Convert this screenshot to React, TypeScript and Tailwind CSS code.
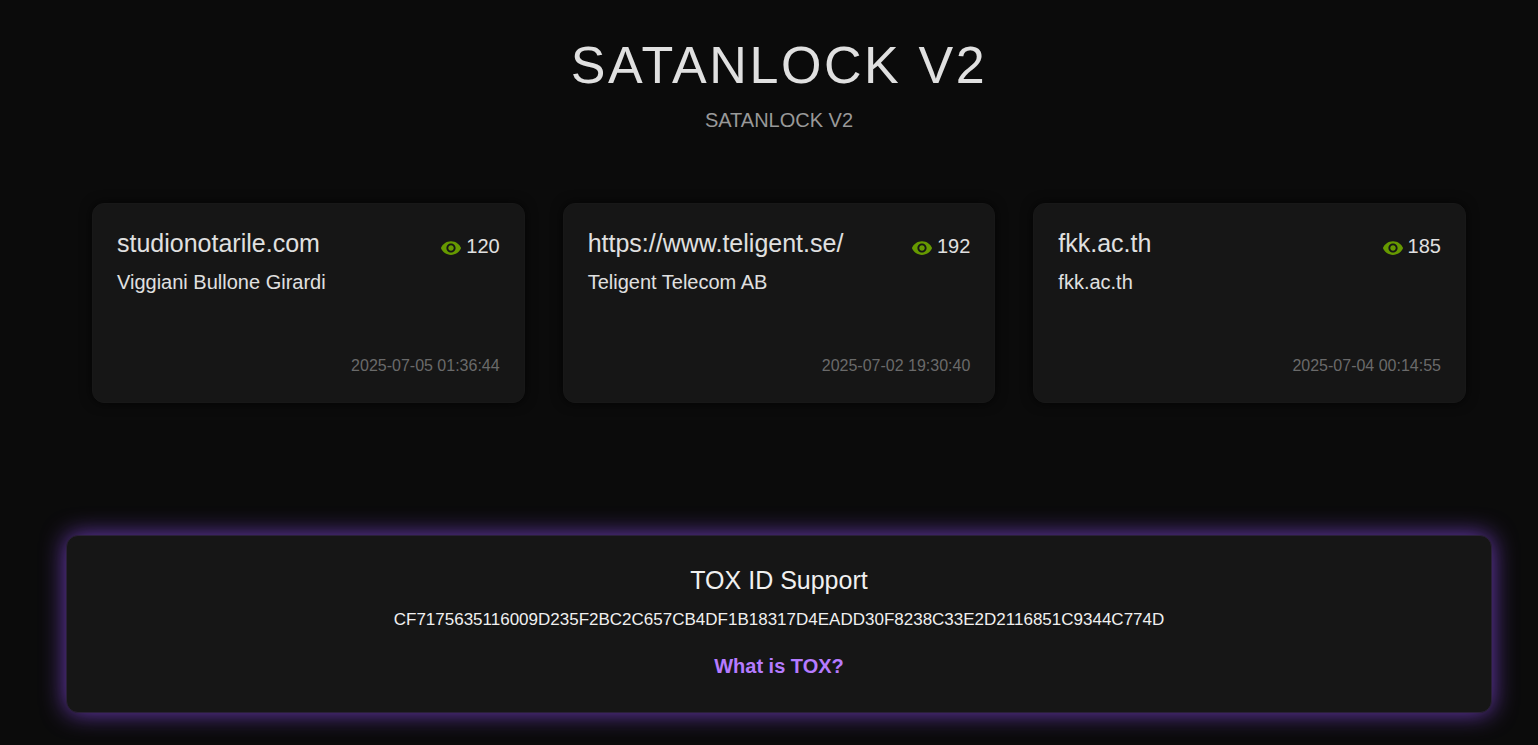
import { MdVisibility } from "react-icons/md";

const posts = [
  { title: "studionotarile.com", company: "Viggiani Bullone Girardi", views: 120, date: "2025-07-05 01:36:44" },
  { title: "https://www.teligent.se/", company: "Teligent Telecom AB", views: 192, date: "2025-07-02 19:30:40" },
  { title: "fkk.ac.th", company: "fkk.ac.th", views: 185, date: "2025-07-04 00:14:55" },
];

function PostCard({ title, company, views, date }: (typeof posts)[number]) {
  return (
    <article className="flex flex-col min-h-[200px] p-6 rounded-xl border border-[#181818] bg-[#161616] shadow-[0_0_12px_rgba(0,0,0,0.7)]">
      <div className="flex items-start justify-between">
        <h2 className="text-[25px] leading-[30px]">{title}</h2>
        <span className="flex items-center gap-1 pt-1 text-xl">
          <MdVisibility className="w-[22px] h-[22px] mt-1 text-[#669900]" />
          {views}
        </span>
      </div>
      <p className="mt-2 text-xl">{company}</p>
      <time className="mt-auto text-right text-base text-[#6a6a6a]">{date}</time>
    </article>
  );
}

export default function App() {
  return (
    <div className="min-h-screen bg-[#0b0b0b] pl-[66px] pr-[46px] pb-8 text-[#e0e0e0] font-['Liberation_Sans',Arial,sans-serif]">
      <header className="pt-8 text-center">
        <h1 className="text-[52px] leading-[66px] tracking-wider">SATANLOCK V2</h1>
        <p className="mt-2 text-xl leading-7 text-[#999999]">SATANLOCK V2</p>
      </header>

      <main className="grid grid-cols-3 gap-[38px] px-[26px] pt-[69px]">
        {posts.map((post) => (
          <PostCard key={post.title} {...post} />
        ))}
      </main>

      <footer className="mt-[132px] flex flex-col items-center rounded-xl border border-[#2a2038] bg-[#161616] px-6 pt-7 pb-8 text-center text-[#f0f0f0] shadow-[0_0_25px_#6f3dbb]">
        <h3 className="text-[25px] leading-8">TOX ID Support</h3>
        <p className="mt-3 text-[17px] leading-6 break-all">
          CF7175635116009D235F2BC2C657CB4DF1B18317D4EADD30F8238C33E2D2116851C9344C774D
        </p>
        <a href="#tox" className="mt-5 text-xl font-bold text-[#b57bff]">
          What is TOX?
        </a>
      </footer>
    </div>
  );
}
